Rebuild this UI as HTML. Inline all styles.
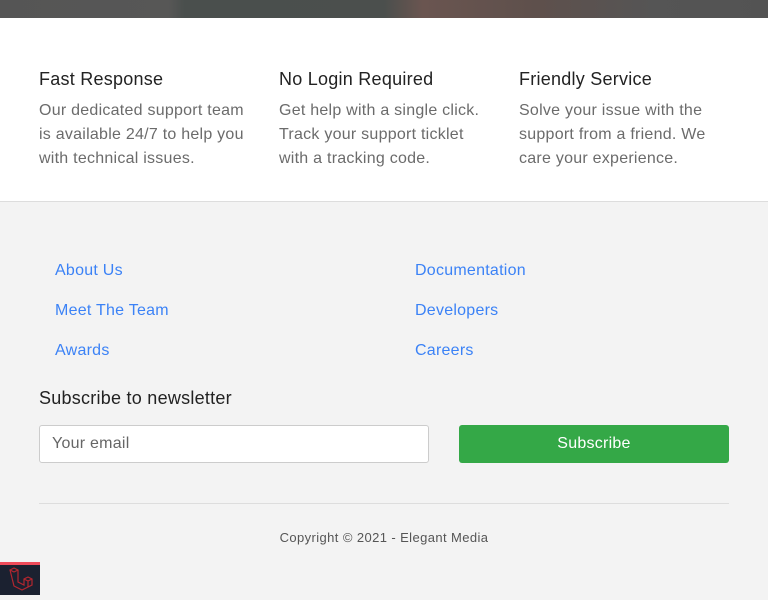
<!DOCTYPE html>
<html><head><style>
body{margin:0;width:768px;height:595px;overflow:hidden;font-family:"Liberation Sans",Helvetica,Arial,sans-serif;background:#f3f3f3;position:relative;letter-spacing:0.25px}
.hero{position:absolute;left:0;top:0;width:768px;height:18px;background:linear-gradient(90deg,#555 0,#575756 22%,#4a4f4d 24%,#4b4f4d 50%,#6a5550 55%,#5e504c 70%,#555 85%,#535353 100%)}
.feat{position:absolute;top:18px;left:0;width:768px;height:183px;background:#fff;border-bottom:1px solid #ddd}
.col{position:absolute;top:51px;width:212px}
.col h3{margin:0 0 10px;font-size:18px;font-weight:500;color:#222;line-height:20px}
.col p{margin:0;font-size:16px;color:#6b6b6b;line-height:24px}
a{color:#3b82f6;text-decoration:none;font-size:16px;position:absolute;top:0}
.sub{position:absolute;left:39px;top:388px;font-size:18px;color:#222}
.inp{position:absolute;left:39px;top:425px;height:36px;border:1px solid #ccc;border-radius:3px;background:#fff;font-size:16px;color:#666;line-height:36px;padding-left:12px;width:376px}
.btn{position:absolute;left:459px;top:425px;width:270px;height:38px;background:#34a847;border-radius:3px;color:#fff;font-size:16px;text-align:center;line-height:38px}
.hr{position:absolute;left:39px;top:503px;width:690px;height:1px;background:#ddd}
.copy{position:absolute;top:530px;width:768px;text-align:center;font-size:13px;color:#555;letter-spacing:0.4px}
.lv{position:absolute;left:0;top:562px;width:40px;height:33px;background:#1b2130;border-top:3px solid #ef4b5a;box-sizing:border-box}
</style></head><body>
<div class="hero"></div>
<div class="feat">
<div class="col" style="left:39px"><h3>Fast Response</h3><p>Our dedicated support team is available 24/7 to help you with technical issues.</p></div>
<div class="col" style="left:279px"><h3>No Login Required</h3><p>Get help with a single click. Track your support ticklet with a tracking code.</p></div>
<div class="col" style="left:519px"><h3>Friendly Service</h3><p>Solve your issue with the support from a friend. We care your experience.</p></div>
</div>
<a style="left:55px;top:262px">About Us</a>
<a style="left:55px;top:302px">Meet The Team</a>
<a style="left:55px;top:342px">Awards</a>
<a style="left:415px;top:262px">Documentation</a>
<a style="left:415px;top:302px">Developers</a>
<a style="left:415px;top:342px">Careers</a>
<div class="sub">Subscribe to newsletter</div>
<div class="inp">Your email</div>
<div class="btn">Subscribe</div>
<div class="hr"></div>
<div class="copy">Copyright © 2021 - Elegant Media</div>
<div class="lv"><svg width="40" height="30" viewBox="0 0 40 30"><path d="M10 5l4-2 4 2v12l6 3v-6l4-2 4 2v6l-10 5-8-4z M18 5l-4 2-4-2 M24 14l4 2 4-2 M28 16v6" fill="none" stroke="#b3262f" stroke-width="1.2"/></svg></div>
</body></html>
